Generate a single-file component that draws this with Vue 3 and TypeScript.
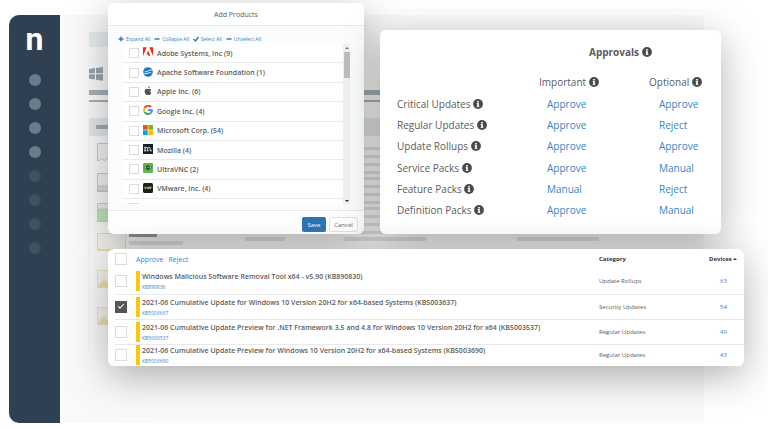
<script setup lang="ts">
import { ref } from 'vue'

interface Product {
  name: string
  count: number
  icon: string
}

interface ApprovalRule {
  label: string
  important: string
  optional: string
}

interface Patch {
  title: string
  kb: string
  category: string
  devices: number
  selected: boolean
}

const products: Product[] = [
  { name: 'Adobe Systems, Inc', count: 9, icon: 'adobe' },
  { name: 'Apache Software Foundation', count: 1, icon: 'apache' },
  { name: 'Apple Inc.', count: 6, icon: 'apple' },
  { name: 'Google Inc.', count: 4, icon: 'google' },
  { name: 'Microsoft Corp.', count: 54, icon: 'microsoft' },
  { name: 'Mozilla', count: 4, icon: 'mozilla' },
  { name: 'UltraVNC', count: 2, icon: 'vnc' },
  { name: 'VMware, Inc.', count: 4, icon: 'vmware' },
]

const rules: ApprovalRule[] = [
  { label: 'Critical Updates', important: 'Approve', optional: 'Approve' },
  { label: 'Regular Updates', important: 'Approve', optional: 'Reject' },
  { label: 'Update Rollups', important: 'Approve', optional: 'Approve' },
  { label: 'Service Packs', important: 'Approve', optional: 'Manual' },
  { label: 'Feature Packs', important: 'Manual', optional: 'Reject' },
  { label: 'Definition Packs', important: 'Approve', optional: 'Manual' },
]

const patches = ref<Patch[]>([
  { title: 'Windows Malicious Software Removal Tool x64 - v5.90 (KB890830)', kb: 'KB890830', category: 'Update Rollups', devices: 63, selected: false },
  { title: '2021-06 Cumulative Update for Windows 10 Version 20H2 for x64-based Systems (KB5003637)', kb: 'KB5003637', category: 'Security Updates', devices: 54, selected: true },
  { title: '2021-06 Cumulative Update Preview for .NET Framework 3.5 and 4.8 for Windows 10 Version 20H2 for x64 (KB5003537)', kb: 'KB5003537', category: 'Regular Updates', devices: 49, selected: false },
  { title: '2021-06 Cumulative Update Preview for Windows 10 Version 20H2 for x64-based Systems (KB5003690)', kb: 'KB5003690', category: 'Regular Updates', devices: 43, selected: false },
])

const thumbs: string[] = ['grey', 'half', 'green', 'gold', 'spikes', 'spikes']
</script>

<template>
  <div class="stage">
    <svg class="defs" width="0" height="0" aria-hidden="true">
      <symbol id="info" viewBox="0 0 10 10">
        <circle cx="5" cy="5" r="4.9" fill="#4a4a4a" />
        <path d="M4 2h2v1.4H4zM3.6 4.1H6v3.1h.5V8H3.6v-.8H4V4.9h-.4z" fill="#e4e4e4" />
      </symbol>
    </svg>

    <div class="window">
      <nav class="rail" aria-label="Main">
        <a class="logo" href="#">n</a>
        <i v-for="n in 8" :key="n" class="dot" :class="{ dim: n > 4 }"></i>
      </nav>
      <div class="report" aria-hidden="true">
        <div class="chip"></div>
        <svg class="win" viewBox="0 0 14 14">
          <path d="M0 2l6-.9v5.2H0zM7 1l7-1v6.3H7zM0 7.3h6v5.3l-6-.8zM7 7.3h7V13.700l-7-1z" fill="#97a2a9" />
        </svg>
        <div class="bar thick"></div>
        <div class="bar thin"></div>
        <div class="strip"><span></span></div>
        <div class="thumbs">
          <div v-for="(t, i) in thumbs" :key="i" class="line">
            <svg class="thumb" viewBox="0 0 29 19">
              <g v-if="t === 'grey'" fill="#f1f1f1" stroke="#c4c6c8">
                <path d="M.5 17.500V.5h28v17l-4-2-4 2-4-3-3 3-3-2-3 2-3-2-2 2z" />
              </g>
              <g v-else-if="t === 'half'" fill="#f1f1f1" stroke="#c4c6c8">
                <rect x=".5" y=".5" width="28" height="18" />
                <path d="M1 13h27v5H1z" fill="#dadada" />
              </g>
              <g v-else-if="t === 'green'" stroke="#b3dcae">
                <rect x=".5" y=".5" width="28" height="18" fill="#e7f1e4" />
                <path d="M1 6h27v12H1z" fill="#bfe2ba" />
              </g>
              <g v-else-if="t === 'gold'" fill="#f5f4ee" stroke="#eadcab">
                <rect x=".5" y=".5" width="28" height="17" />
                <path d="M1 16.500h27" />
              </g>
              <g v-else stroke="#ece0b5" fill="#f4f2ea">
                <rect x=".5" y=".5" width="28" height="17" />
                <path d="M1 17v-3l2 1 1-4 1 3 2-6 1 5 1-3 1 4 2-2 2-4 2 5 3-1 3 2 3-6 2 5v4z" fill="#eadcab" stroke-width=".5" />
              </g>
            </svg>
            <div class="words"><b></b><s></s></div>
            <div class="words mid"><s></s></div>
            <div class="words wide"><s></s></div>
            <div class="words wide"><s></s></div>
          </div>
        </div>
      </div>
    </div>

    <main class="cards">
      <section class="card dialog" aria-labelledby="dialog-title">
        <h2 id="dialog-title">Add Products</h2>
        <div class="body">
          <div class="tools">
            <button type="button"><svg viewBox="0 0 6 6"><path d="M3 .5v5M.5 3h5" /></svg>Expand All</button>
            <button type="button"><svg viewBox="0 0 6 6"><path d="M.5 3h5" /></svg>Collapse All</button>
            <button type="button"><svg viewBox="0 0 6 6"><path d="M.5 3l2 2 3-4" /></svg>Select All</button>
            <button type="button"><svg viewBox="0 0 6 6"><path d="M.5 3h5" /></svg>Unselect All</button>
          </div>
          <div class="scroller">
            <ul>
              <li v-for="p in products" :key="p.name">
                <label>
                  <input type="checkbox" class="box" />
                  <svg class="brand" viewBox="0 0 10 10">
                    <template v-if="p.icon === 'adobe'">
                      <path d="M0 .3h3.700L0 9zM6.300.3H10V9zM5 3.400L7.400 9H5.800L5.100 7.400H3.400z" fill="#ee2a1e" />
                    </template>
                    <template v-else-if="p.icon === 'apache'">
                      <circle cx="5" cy="5" r="4.800" fill="#1878c8" />
                      <path d="M1.800 4.400c1.600.9 2.800-.1 3.700-.7 1-.7 2.200-.8 4-.4M.4 6.200c2 .9 3.400.6 4.600-.1 1-.6 2-.7 3.300-.1" fill="none" stroke="#e8f4fc" stroke-width="1" />
                    </template>
                    <template v-else-if="p.icon === 'apple'">
                      <path d="M5.100 2.300C5 1.200 5.900.3 6.800.2c.1 1-.7 2-1.700 2.100zM8.200 6.900c-.4 1.100-1 2.100-1.700 2.100-.6 0-.8-.3-1.400-.3S4.200 9 3.700 9C2.700 9 1.600 7 1.600 5.300c0-1.600 1-2.600 2-2.600.7 0 1.100.4 1.600.4s.9-.5 1.700-.4c.6 0 1 .3 1.300.7-1.200.8-1 2.800 0 3.500z" fill="#555" />
                    </template>
                    <g v-else-if="p.icon === 'google'" fill="none" stroke-width="1.900">
                      <path d="M8.100 2.100A4 4 0 0 0 1.500 3.100" stroke="#ea4335" />
                      <path d="M1.500 3.100a4 4 0 0 0 0 3.800" stroke="#fbbc05" />
                      <path d="M1.500 6.900a4 4 0 0 0 6.200 1.200" stroke="#34a853" />
                      <path d="M7.700 8.100A4 4 0 0 0 9 5.100H5" stroke="#4285f4" />
                    </g>
                    <template v-else-if="p.icon === 'microsoft'">
                      <path d="M0 0h4.700v4.700H0z" fill="#f25022" />
                      <path d="M5.300 0H10v4.700H5.300z" fill="#7fba00" />
                      <path d="M0 5.300h4.700V10H0z" fill="#00a4ef" />
                      <path d="M5.300 5.300H10V10H5.300z" fill="#ffb900" />
                    </template>
                    <template v-else-if="p.icon === 'mozilla'">
                      <rect width="10" height="10" fill="#17202a" />
                      <path d="M1 3.400h1.200v3.300M1 6.800h2.200M2.300 4.100c.8-1 2.300-1 2.300.4v2.300M4.100 6.800h1.500M4.700 4.100c.8-1 2.500-1 2.500.4v2.300h1.700" fill="none" stroke="#fff" stroke-width=".9" />
                    </template>
                    <template v-else-if="p.icon === 'vnc'">
                      <rect width="10" height="10" rx="1" fill="#5dbb4b" />
                      <path d="M1 4.800Q5 0 9 4.800 5 8.600 1 4.800z" fill="#a9d8a2" stroke="#2b6429" stroke-width=".7" />
                      <circle cx="5" cy="4.700" r="1.900" fill="#26374a" />
                      <circle cx="5.300" cy="4.300" r=".6" fill="#cfe6f0" />
                    </template>
                    <template v-else>
                      <rect width="10" height="10" rx="1.500" fill="#18202a" />
                      <path d="M1.300 3.800l1.100 2 1-2 1 2 .9-2M5.600 6V4h1.200v2M7.500 6V4h1.300" fill="none" stroke="#b5c838" stroke-width=".9" />
                    </template>
                  </svg>
                  <span>{{ p.name }} ({{ p.count }})</span>
                </label>
              </li>
              <li><label><input type="checkbox" class="box" aria-label="More" /></label></li>
            </ul>
            <div class="track" aria-hidden="true">
              <i class="up"></i>
              <i class="grip"></i>
              <i class="down"></i>
            </div>
          </div>
        </div>
        <footer>
          <button type="button" class="save">Save</button>
          <button type="button" class="cancel">Cancel</button>
        </footer>
      </section>

      <section class="card approvals">
        <table>
          <colgroup>
            <col class="c-label" />
            <col class="c-important" />
            <col />
          </colgroup>
          <thead>
            <tr class="caption">
              <td></td>
              <th colspan="2" scope="colgroup">Approvals <svg class="info"><use href="#info" /></svg></th>
            </tr>
            <tr class="heads">
              <td></td>
              <th scope="col">Important <svg class="info"><use href="#info" /></svg></th>
              <th scope="col">Optional <svg class="info"><use href="#info" /></svg></th>
            </tr>
          </thead>
          <tbody>
            <tr v-for="r in rules" :key="r.label">
              <th scope="row">{{ r.label }} <svg class="info"><use href="#info" /></svg></th>
              <td><a href="#">{{ r.important }}</a></td>
              <td><a href="#">{{ r.optional }}</a></td>
            </tr>
          </tbody>
        </table>
      </section>

      <section class="card patches">
        <table>
          <thead>
            <tr>
              <th class="pick"><input type="checkbox" class="box" aria-label="Select all" /></th>
              <th class="acts"><button type="button">Approve</button><button type="button">Reject</button></th>
              <th class="cat" scope="col">Category</th>
              <th class="dev" scope="col">Devices <i class="caret"></i></th>
            </tr>
          </thead>
          <tbody>
            <tr v-for="p in patches" :key="p.kb">
              <td class="pick"><input v-model="p.selected" type="checkbox" class="box" :aria-label="p.kb" /></td>
              <td>
                <div class="patch">
                  <strong>{{ p.title }}</strong>
                  <a href="#">{{ p.kb }}</a>
                </div>
              </td>
              <td class="cat">{{ p.category }}</td>
              <td class="dev"><a href="#">{{ p.devices }}</a></td>
            </tr>
          </tbody>
        </table>
      </section>
    </main>
  </div>
</template>

<style>
body {
  background: #fff;
}
</style>

<style scoped>
.stage {
  position: relative;
  box-sizing: border-box;
  min-height: 100vh;
  overflow: hidden;
  font-family: 'Open Sans', 'Noto Sans', sans-serif;
  color: #5c5c5c;
}
.stage *,
.stage *::before {
  box-sizing: border-box;
}
.defs {
  position: absolute;
}
a {
  color: #3585c6;
  text-decoration: none;
}
button {
  font: inherit;
  color: #3585c6;
  background: none;
  border: 0;
  padding: 0;
}
table {
  border-collapse: collapse;
  width: 100%;
}
th,
td {
  padding: 0;
  text-align: left;
  font-weight: 400;
}
.box {
  appearance: none;
  display: block;
  flex: none;
  width: 10px;
  height: 10px;
  margin: 0;
  background: #fff;
  border: 1px solid #dcdcdc;
}

/* Application window behind the cards */
.window {
  position: absolute;
  inset: 15px 64px 6px 9px;
  display: flex;
  overflow: hidden;
  background: #f8f9f8;
  border-radius: 10px 0 0 10px;
}
.rail {
  display: flex;
  flex-direction: column;
  align-items: center;
  gap: 12px;
  width: 51px;
  background: #2e4051;
}
.logo {
  margin-top: 10px;
  height: 37px;
  font-family: Roboto, sans-serif;
  font-size: 32px;
  line-height: 28px;
  font-weight: 700;
  color: #fff;
}
.dot {
  width: 12px;
  height: 12px;
  border-radius: 50%;
  background: #6c7b8b;
}
.dot.dim {
  background: #40505f;
}
.report {
  flex: 1;
  padding: 17px 0 0 29px;
}
.chip {
  width: 60px;
  height: 15px;
  background: #e6ebee;
}
.win {
  display: block;
  width: 14px;
  height: 14px;
  margin-top: 20px;
}
.bar {
  width: 320px;
  background: #a4adb3;
}
.bar.thick {
  height: 5px;
  margin-top: 9px;
}
.bar.thin {
  height: 2px;
  margin-top: 5px;
}
.strip {
  height: 18px;
  margin-top: 16px;
  padding: 7px;
  background: #e1e6e9;
}
.strip span {
  display: block;
  width: 60px;
  height: 4px;
  background: #a1a9af;
}
.thumbs {
  display: grid;
  grid-template-rows: repeat(3, 30px) repeat(3, 37px);
  padding: 7px;
  border-left: 1px solid #efefef;
}
.line {
  display: flex;
  gap: 3px;
}
.thumb {
  flex: none;
  width: 29px;
  height: 19px;
}
.words {
  flex: none;
  width: 113px;
}
.words b {
  display: block;
  width: 28px;
  height: 4px;
  background: #8e9499;
}
.words s {
  display: block;
  width: 54px;
  height: 4px;
  margin-top: 4px;
  background: #dddfdf;
}
.words.mid {
  width: 96px;
}
.words.mid s {
  width: 40px;
}
.words.wide {
  width: 170px;
}
.words.wide s {
  width: 82px;
}
.line:nth-child(-n + 3) .words.wide s {
  height: 28px;
  background: repeating-linear-gradient(#dddfdf 0 3px, transparent 3px 8px);
}

/* Cards */
.cards {
  position: relative;
  display: grid;
  grid-template-columns: minmax(0, 64fr) minmax(0, 91fr);
  gap: 15px 16px;
  padding: 3px 24px 63px 108px;
}
.card {
  background: #fff;
  border-radius: 6px;
  box-shadow: 0 10px 38px rgba(40, 40, 35, 0.36);
}
.dialog {
  overflow: hidden;
}
.dialog h2 {
  margin: 0;
  height: 23px;
  border-bottom: 1px solid #e6e8e9;
  font-size: 7px;
  line-height: 23px;
  font-weight: 400;
  text-align: center;
}
.body {
  height: 184px;
  padding: 7px 14px 6px 10px;
  background: #fafcfd;
}
.tools {
  display: flex;
  gap: 4px;
  height: 11px;
  font-size: 5px;
}
.tools button {
  display: flex;
  align-items: center;
  gap: 2px;
}
.tools svg {
  width: 6px;
  height: 6px;
  fill: none;
  stroke: #2f7dc0;
  stroke-width: 1.4;
}
.scroller {
  display: flex;
  height: 160px;
  overflow: hidden;
  margin-left: 5px;
}
ul {
  flex: 1;
  display: grid;
  grid-template-rows: repeat(8, 1fr);
  grid-auto-rows: 19px;
  height: 174px;
  margin: 0;
  padding: 0;
  list-style: none;
}
li {
  background: #fff;
  border-bottom: 1px solid #e9eaeb;
}
label {
  display: flex;
  align-items: center;
  gap: 4px;
  height: 100%;
  padding-left: 6px;
  font-size: 7px;
  font-weight: 600;
}
.brand {
  flex: none;
  width: 10px;
  height: 10px;
  margin-bottom: 2px;
}
.track {
  display: flex;
  flex-direction: column;
  align-items: center;
  width: 7px;
  background: #f1f1f1;
}
.up,
.down,
.caret {
  display: inline-block;
  border: 2px solid transparent;
}
.up {
  margin: 1px 0 3px;
  border-bottom-color: #777;
}
.grip {
  width: 6px;
  height: 26px;
  background: #bdbdbd;
}
.down {
  margin: auto 0 0;
  border-top-color: #333;
}
.dialog footer {
  display: flex;
  justify-content: flex-end;
  gap: 3px;
  padding: 6px 6px 2px;
  border-top: 1px solid #e6e8e9;
  font-size: 6px;
}
.save,
.cancel {
  height: 15px;
  border-radius: 2px;
}
.save {
  width: 24px;
  color: #fff;
  background: #2e75b6;
}
.cancel {
  width: 29px;
  color: #666;
  background: #fff;
  border: 1px solid #e4e4e4;
}

.approvals {
  margin: 27px 23px 0 0;
  padding: 7px 6px 13px 17px;
  font-size: 10px;
}
.approvals table {
  table-layout: fixed;
  height: 184px;
}
.c-label {
  width: 142px;
}
.c-important {
  width: 110px;
}
.approvals tbody td {
  padding-left: 8px;
}
.approvals tbody td:last-child {
  padding-left: 10px;
}
.approvals .caption th {
  padding-left: 50px;
  font-weight: 700;
}
.caption {
  height: 30px;
}
.heads {
  height: 26px;
}
.heads th {
  padding-top: 4px;
}
.info {
  width: 10px;
  height: 10px;
  vertical-align: -1px;
}

.patches {
  grid-column: 1 / -1;
  overflow: hidden;
  padding-left: 7px;
  font-size: 6px;
}
.patches .box {
  width: 12px;
  height: 12px;
}
.patches .box:checked {
  border-color: #555;
  background: #555;
  display: grid;
  place-items: center;
}
.patches .box:checked::before {
  content: '';
  width: 6px;
  height: 3px;
  margin-bottom: 2px;
  border: solid #fff;
  border-width: 0 0 1px 1px;
  transform: rotate(-45deg);
}
.patches thead tr {
  height: 20px;
}
.patches tbody tr {
  height: 25px;
}
.patches tbody tr + tr {
  border-top: 1px solid #e9e9e9;
}
.patches tbody tr:last-child {
  height: 22px;
}
.pick {
  width: 21px;
}
.acts {
  font-size: 7px;
}
.acts button + button {
  margin-left: 5px;
}
.cat {
  width: 110px;
}
.dev {
  width: 35px;
}
.patches thead .cat,
.patches thead .dev {
  color: #333;
  font-weight: 700;
}
.patches tbody .dev {
  padding-left: 11px;
}
.caret {
  border-bottom-color: #333;
  vertical-align: 1px;
}
.patch {
  display: flex;
  flex-direction: column;
  height: 20px;
  padding-left: 2px;
  border-left: 4px solid #fbc70e;
}
.patch strong {
  font-size: 7px;
  line-height: 12px;
  font-weight: 600;
}
.patch a {
  font-size: 5px;
  line-height: 8px;
}
</style>
